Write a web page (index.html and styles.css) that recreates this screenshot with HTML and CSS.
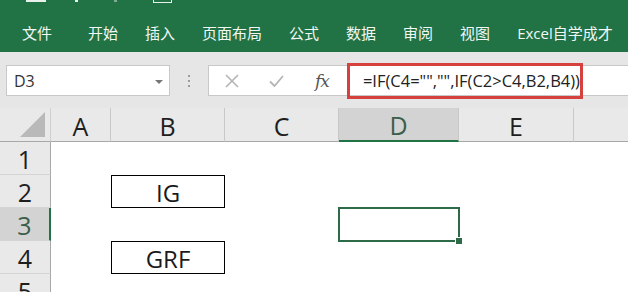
FILE: index.html
```html
<!DOCTYPE html>
<html lang="zh-CN">
<head>
    <meta charset="UTF-8">
    <meta name="viewport" content="width=device-width, initial-scale=1.0">
    <title>Excel</title>
    <link rel="stylesheet" href="styles.css">
</head>
<body>
    <div class="ribbon">
        <div class="quick">
            <span class="qa qa-save"></span>
            <span class="qa qa-dot"></span>
            <span class="qa qa-dot dim"></span>
            <span class="qa qa-print"></span>
        </div>
        <div class="tabs">
            <span class="tab tab-file">文件</span>
            <span class="tab">开始</span>
            <span class="tab">插入</span>
            <span class="tab">页面布局</span>
            <span class="tab">公式</span>
            <span class="tab">数据</span>
            <span class="tab">审阅</span>
            <span class="tab">视图</span>
            <span class="tab">Excel自学成才</span>
        </div>
    </div>

    <div class="formula-row">
        <div class="name-box">
            <span>D3</span>
            <span class="arrow"></span>
        </div>
        <div class="grip">
            <i></i><i></i><i></i>
        </div>
        <div class="formula-bar">
            <svg class="btn" width="14" height="14" viewBox="0 0 14 14">
                <path d="M1 1 L13 13 M13 1 L1 13" stroke="#b4b4b4" stroke-width="1.6" fill="none"/>
            </svg>
            <svg class="btn" width="15" height="12" viewBox="0 0 15 12">
                <path d="M1 6.5 L5.5 11 L14 1" stroke="#b4b4b4" stroke-width="1.8" fill="none"/>
            </svg>
            <span class="fx">fx</span>
            <div class="formula">=IF(C4="","",IF(C2&gt;C4,B2,B4))</div>
        </div>
    </div>

    <div class="sheet">
        <div class="corner"><span class="tri"></span></div>
        <div class="col-head">A</div>
        <div class="col-head">B</div>
        <div class="col-head">C</div>
        <div class="col-head active">D</div>
        <div class="col-head">E</div>
        <div class="col-head last"></div>

        <div class="row-head">1</div>
        <div class="cell"></div><div class="cell"></div><div class="cell"></div><div class="cell"></div><div class="cell"></div><div class="cell"></div>

        <div class="row-head">2</div>
        <div class="cell"></div><div class="cell boxed">IG</div><div class="cell"></div><div class="cell"></div><div class="cell"></div><div class="cell"></div>

        <div class="row-head active">3</div>
        <div class="cell"></div><div class="cell"></div><div class="cell"></div><div class="cell selected"></div><div class="cell"></div><div class="cell"></div>

        <div class="row-head">4</div>
        <div class="cell"></div><div class="cell boxed">GRF</div><div class="cell"></div><div class="cell"></div><div class="cell"></div><div class="cell"></div>

        <div class="row-head">5</div>
        <div class="cell"></div><div class="cell"></div><div class="cell"></div><div class="cell"></div><div class="cell"></div><div class="cell"></div>
    </div>
</body>
</html>
```

FILE: styles.css
```css
* {
    box-sizing: border-box;
}
body {
    margin: 0;
    width: 628px;
    height: 292px;
    overflow: hidden;
    background: #fff;
    font-family: "Open Sans", "Noto Sans CJK SC", sans-serif;
}

/* ribbon */
.ribbon {
    height: 52px;
    background: #217346;
    color: #fff;
}
.quick {
    height: 23px;
    position: relative;
}
.qa {
    position: absolute;
    top: 0;
    background: #e8f1ec;
}
.qa-save {
    left: 26px;
    width: 20px;
    height: 2px;
}
.qa-dot {
    left: 75px;
    width: 3px;
    height: 2px;
}
.qa-dot.dim {
    left: 114px;
    background: #7fae94;
}
.qa-print {
    left: 153px;
    width: 19px;
    height: 3px;
    background: transparent;
    border: 1px solid #e8f1ec;
    border-top: none;
}
.tabs {
    display: flex;
    padding-left: 22px;
    line-height: 20px;
    font-size: 15px;
    white-space: nowrap;
}
.tab {
    flex-shrink: 0;
    margin-right: 27px;
    color: #f2f7f4;
}
.tab-file {
    margin-right: 36px;
}

/* formula bar */
.formula-row {
    height: 56px;
    background: #e6e6e6;
    display: flex;
    align-items: flex-start;
    padding-top: 13px;
    padding-left: 6px;
}
.name-box {
    width: 164px;
    height: 31px;
    background: #fff;
    border: 1px solid #c8c8c8;
    display: flex;
    align-items: center;
    justify-content: space-between;
    padding: 0 6px 0 7px;
    font-size: 16px;
    color: #333;
}
.arrow {
    width: 0;
    height: 0;
    border-left: 4px solid transparent;
    border-right: 4px solid transparent;
    border-top: 4px solid #777;
    margin-top: 2px;
}
.grip {
    width: 38px;
    height: 31px;
    display: flex;
    flex-direction: column;
    align-items: center;
    justify-content: center;
    gap: 3px;
}
.grip i {
    display: block;
    width: 2px;
    height: 2px;
    background: #9c9c9c;
}
.formula-bar {
    flex: 1;
    height: 31px;
    background: #fff;
    border: 1px solid #c8c8c8;
    border-right: none;
    display: flex;
    align-items: center;
    padding-left: 16px;
}
.btn {
    margin-right: 30px;
}
.btn + .btn {
    margin-right: 31px;
}
.fx {
    font-family: "DejaVu Serif", serif;
    font-style: italic;
    font-size: 17px;
    color: #555;
    margin-right: 18px;
    letter-spacing: -1px;
}
.formula {
    height: 36px;
    border: 3px solid #d6403d;
    width: 236px;
    padding-left: 13px;
    display: flex;
    align-items: center;
    font-size: 16.5px;
    color: #222;
    white-space: nowrap;
}

/* sheet */
.sheet {
    display: grid;
    grid-template-columns: 51px 60px 114px 114px 120px 115px 1fr;
    grid-template-rows: 34px repeat(5, 33px);
    background: #e6e6e6;
}
.corner {
    background: #e9e9e9;
    border-right: 1px solid #d0d0d0;
    border-bottom: 1px solid #a8a8a8;
    position: relative;
}
.tri {
    position: absolute;
    right: 5px;
    bottom: 4px;
    width: 0;
    height: 0;
    border-left: 25px solid transparent;
    border-bottom: 25px solid #b9b9b9;
}
.col-head {
    background: #e9e9e9;
    border-right: 1px solid #c8c8c8;
    border-bottom: 1px solid #a8a8a8;
    display: flex;
    align-items: center;
    justify-content: center;
    font-size: 25px;
    color: #1e1e1e;
    padding-top: 2px;
}
.col-head.last {
    border-right: none;
}
.col-head.active {
    background: #d3d3d3;
    color: #3b5e4a;
    border-bottom: 2px solid #217346;
}
.row-head {
    background: #e9e9e9;
    border-right: 1px solid #a8a8a8;
    border-bottom: 1px solid #d4d4d4;
    display: flex;
    align-items: center;
    justify-content: center;
    font-size: 25px;
    color: #1e1e1e;
    padding-top: 2px;
}
.row-head.active {
    background: #d3d3d3;
    color: #3b5e4a;
    border-right: 2px solid #217346;
}
.cell {
    background: #fff;
    display: flex;
    align-items: center;
    justify-content: center;
    font-size: 24px;
    color: #1a1a1a;
    padding-top: 1px;
}
.cell.boxed {
    border: 1px solid #000;
}
.cell.selected {
    position: relative;
    outline: 2px solid #2c6a48;
    outline-offset: -1px;
}
.cell.selected::after {
    content: "";
    position: absolute;
    right: -4px;
    bottom: -4px;
    width: 6px;
    height: 6px;
    background: #2c6a48;
    border: 1px solid #fff;
}
```
